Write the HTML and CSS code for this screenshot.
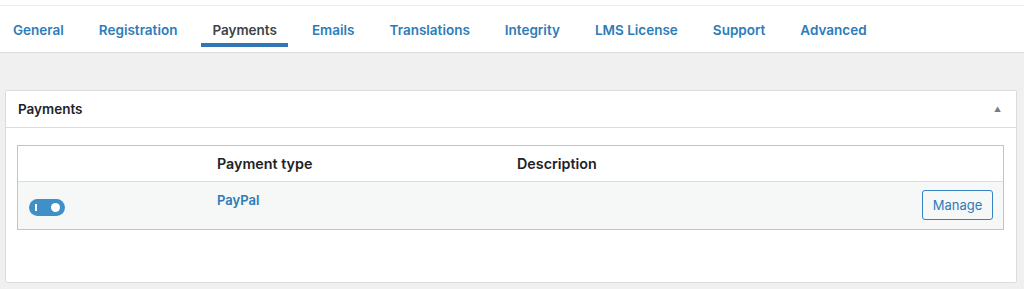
FILE: index.html
```html
<!DOCTYPE html>
<html lang="en">
<head>
    <meta charset="UTF-8">
    <title>Settings - Payments</title>
    <link rel="stylesheet" href="styles.css">
</head>
<body>
    <div class="top">
        <nav class="tabs">
            <a class="tab" href="#">General</a>
            <a class="tab" href="#">Registration</a>
            <a class="tab active" href="#">Payments</a>
            <a class="tab" href="#">Emails</a>
            <a class="tab" href="#">Translations</a>
            <a class="tab" href="#">Integrity</a>
            <a class="tab" href="#">LMS License</a>
            <a class="tab" href="#">Support</a>
            <a class="tab" href="#">Advanced</a>
        </nav>
    </div>

    <div class="panel">
        <div class="panel-head">
            <h2>Payments</h2>
            <span class="collapse">&#9650;</span>
        </div>
        <div class="panel-body">
            <div class="gateways">
                <div class="row head">
                    <div></div>
                    <div>Payment type</div>
                    <div>Description</div>
                    <div></div>
                </div>
                <div class="row item">
                    <div><span class="toggle on"><i class="bar"></i><i class="knob"></i></span></div>
                    <div><a href="#" class="name">PayPal</a></div>
                    <div></div>
                    <div><button class="manage">Manage</button></div>
                </div>
            </div>
        </div>
    </div>
</body>
</html>
```

FILE: styles.css
```css
body {
    margin: 0;
    background: #f0f0f1;
    font-family: Inter, "Open Sans", sans-serif;
    color: #1d2327;
}
.top {
    background: #fff;
    padding-top: 5px;
    border-bottom: 1px solid #dcdcde;
}
.tabs {
    display: flex;
    gap: 13px;
    padding: 0 2px 5px;
    border-top: 1px solid #ececec;
}
.tab {
    padding: 16px 11px 4px;
    line-height: 17px;
    font-size: 13.5px;
    font-weight: 600;
    color: #2c7cba;
    text-decoration: none;
    border-bottom: 4px solid transparent;
}
.tab.active {
    color: #3c434a;
    border-bottom-color: #3177b6;
}
.panel {
    margin: 37px 7px 0 5px;
    background: #fff;
    border: 1px solid #dcdcde;
    border-radius: 2px;
}
.panel-head {
    display: flex;
    align-items: center;
    justify-content: space-between;
    height: 36px;
    padding: 0 15px 0 12px;
    border-bottom: 1px solid #dcdcde;
}
.panel-head h2 {
    margin: 0;
    font-size: 13.5px;
    font-weight: 600;
}
.collapse {
    font-size: 7px;
    color: #787c82;
}
.panel-body {
    padding: 17px 12px 52px 11px;
}
.gateways {
    border: 1px solid #c3c4c7;
}
.row {
    display: grid;
    grid-template-columns: 199px 300px 1fr auto;
}
.row.head {
    height: 35px;
    align-items: center;
    font-size: 14.3px;
    font-weight: 600;
    border-bottom: 1px solid #dcdcde;
}
.row.item {
    background: #f6f7f7;
    padding: 8px 10px 9px 0;
    align-items: start;
}
.toggle {
    position: relative;
    display: block;
    width: 36px;
    height: 17px;
    margin: 9px 0 0 11px;
    border-radius: 9px;
    background: #3f8fc9;
}
.toggle .bar {
    position: absolute;
    left: 6px;
    top: 5px;
    width: 2px;
    height: 7px;
    background: #fff;
}
.toggle .knob {
    position: absolute;
    right: 5px;
    top: 4px;
    width: 9px;
    height: 9px;
    border-radius: 50%;
    background: #fff;
}
.name {
    display: block;
    margin-top: 2px;
    font-size: 13px;
    font-weight: 600;
    color: #2c7cba;
    text-decoration: none;
}
.manage {
    width: 71px;
    height: 30px;
    padding: 0;
    background: #f6f7f7;
    border: 1px solid #3582c4;
    border-radius: 3px;
    color: #2c7cba;
    font-family: inherit;
    font-size: 13px;
}
```
